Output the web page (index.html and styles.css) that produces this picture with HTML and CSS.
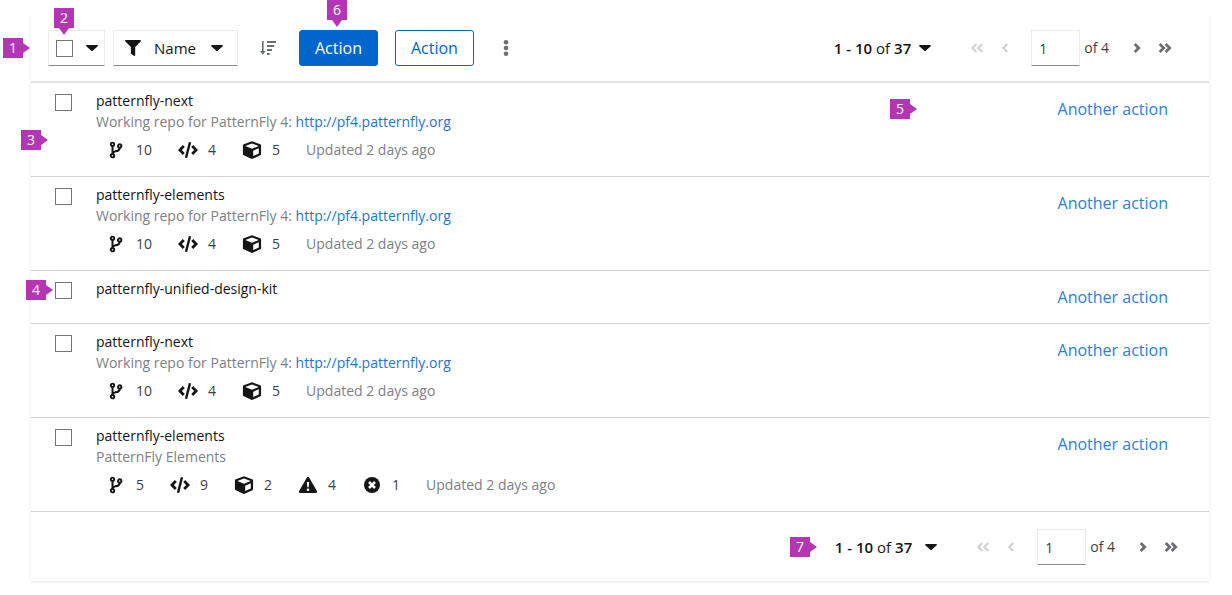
FILE: index.html
```
<!DOCTYPE html>
<html lang="en">
<head>
<meta charset="utf-8">
<meta name="viewport" content="width=device-width, initial-scale=1">
<title>Repositories</title>
<link rel="stylesheet" href="styles.css">
</head>
<body>
<svg class="sprite" aria-hidden="true">
  <symbol id="caret" viewBox="0 0 12 6"><path d="M.8 0h10.400c.7 0 1 .8.5 1.300L6.700 5.700a1 1 0 0 1-1.400 0L.3 1.300C-.2.8.1 0 .8 0z"/></symbol>
  <symbol id="filter" viewBox="0 0 16 16"><path d="M.8 0h14.400c.7 0 1 .8.6 1.300L10.200 7v8.200c0 .7-.7 1-1.200.6l-2.700-1.900a1 1 0 0 1-.4-.7V7L.2 1.300C-.3.8.1 0 .8 0z"/></symbol>
  <symbol id="sort" viewBox="0 0 16 14"><path d="M2 0h1.600v10H5.500L2.800 13.800 0 10h2zM7 0h9v1.900H7zM7 4h7.200v1.900H7zM7 8h5v1.900H7zM7 12h2.600v1.900H7z"/></symbol>
  <symbol id="kebab" viewBox="0 0 6 16"><circle cx="3" cy="2.300" r="2.300"/><circle cx="3" cy="8" r="2.300"/><circle cx="3" cy="13.700" r="2.300"/></symbol>
  <symbol id="left" viewBox="0 0 8 10"><path d="M6.300 1 2.300 5l4 4" fill="none" stroke="currentColor" stroke-width="2.300"/></symbol>
  <symbol id="left2" viewBox="0 0 14 10"><path d="M6.300 1 2.300 5l4 4M12.300 1l-4 4 4 4" fill="none" stroke="currentColor" stroke-width="2.300"/></symbol>
  <symbol id="right" viewBox="0 0 8 10"><path d="m1.700 1 4 4-4 4" fill="none" stroke="currentColor" stroke-width="2.800"/></symbol>
  <symbol id="right2" viewBox="0 0 14 10"><path d="m1.700 1 4 4-4 4M7.700 1l4 4-4 4" fill="none" stroke="currentColor" stroke-width="2.800"/></symbol>
  <symbol id="branch" viewBox="0 0 20 18"><g fill="none" stroke="currentColor" stroke-width="1.900"><circle cx="6.500" cy="3.300" r="1.700"/><circle cx="6.500" cy="14.700" r="1.700"/><circle cx="13.700" cy="5" r="1.700"/><path d="M6.500 5v8M13.700 6.700c0 3.300-2.200 3.400-4.700 3.700-1.600.2-2.500.9-2.500 2.600" stroke-width="2"/></g></symbol>
  <symbol id="code" viewBox="0 0 20 18"><path d="M5.800 5 1.900 9l3.900 4M14.200 5l3.900 4-3.900 4" fill="none" stroke="currentColor" stroke-width="2.800"/><path d="M12 1.200 8 16.800" stroke="currentColor" stroke-width="2.400"/></symbol>
  <symbol id="cube" viewBox="0 0 20 18"><path fill-rule="evenodd" d="M9.300.4q.7-.3 1.400 0l7.500 2.800q.9.400.9 1.300v8.600q0 .8-.8 1.200l-7.600 3.500q-.7.3-1.400 0l-7.600-3.500q-.8-.4-.8-1.200V4.500q0-.9.900-1.300zM10 2.500 3.300 5 10 7.700 16.700 5zM11.200 9.700v5.400l5.600-2.700V7.300z"/></symbol>
  <symbol id="warn" viewBox="0 0 20 18"><path fill-rule="evenodd" d="M8.900 1.500q1.100-1.600 2.200 0l7.800 13.600q.7 1.700-1 1.900H2.100q-1.700-.2-1-1.900zM8.900 6l.4 5.300h1.400l.4-5.300zM10 12.500a1.300 1.300 0 1 0 0 2.600 1.300 1.300 0 0 0 0-2.600z"/></symbol>
  <symbol id="error" viewBox="0 0 20 18"><circle cx="10" cy="9" r="8"/><path d="m7 6 6 6M13 6l-6 6" stroke="#fff" stroke-width="2.600"/></symbol>
</svg>

<main class="card">
  <span class="marker marker-1">1</span>
  <header class="toolbar">
    <div class="bulk">
      <span class="marker marker-down marker-2">2</span>
      <input class="check" type="checkbox" aria-label="Select all">
      <button class="plain" aria-label="Selection options"><svg class="caret"><use href="#caret"/></svg></button>
    </div>
    <label class="filter">
      <svg class="icon-16"><use href="#filter"/></svg>
      <select class="filter-select" aria-label="Filter by"><option>Name</option></select>
      <svg class="caret filter-caret"><use href="#caret"/></svg>
    </label>
    <button class="plain sort" aria-label="Sort"><svg class="icon-sort"><use href="#sort"/></svg></button>
    <div class="actions">
      <span class="marker marker-down marker-6">6</span>
      <button class="btn btn-primary">Action</button>
      <button class="btn btn-secondary">Action</button>
    </div>
    <button class="plain kebab" aria-label="More actions"><svg class="icon-kebab"><use href="#kebab"/></svg></button>
    <nav class="pagination" aria-label="Pagination">
      <button class="plain range"><span><b>1 - 10</b> of <b>37</b></span><svg class="caret"><use href="#caret"/></svg></button>
      <button class="plain first" disabled aria-label="First page"><svg class="icon-double"><use href="#left2"/></svg></button>
      <button class="plain prev" disabled aria-label="Previous page"><svg class="icon-single"><use href="#left"/></svg></button>
      <input class="page" type="text" value="1" aria-label="Current page"><span class="total">of 4</span>
      <button class="plain next" aria-label="Next page"><svg class="icon-single"><use href="#right"/></svg></button>
      <button class="plain last" aria-label="Last page"><svg class="icon-double"><use href="#right2"/></svg></button>
    </nav>
  </header>

  <ul class="list">
    <li class="row">
      <span class="marker marker-3">3</span>
      <input class="check" type="checkbox" id="r1">
      <div class="body">
        <label class="name" for="r1">patternfly-next</label>
        <p class="desc">Working repo for PatternFly 4: <a href="#">http://pf4.patternfly.org</a></p>
        <div class="stats">
          <span class="stat"><svg class="icon-20"><use href="#branch"/></svg>10</span>
          <span class="stat"><svg class="icon-20"><use href="#code"/></svg>4</span>
          <span class="stat"><svg class="icon-20"><use href="#cube"/></svg>5</span>
          <span class="updated">Updated 2 days ago</span>
        </div>
      </div>
      <span class="marker marker-5">5</span>
      <button class="plain another">Another action</button>
    </li>
    <li class="row">
      <input class="check" type="checkbox" id="r2">
      <div class="body">
        <label class="name" for="r2">patternfly-elements</label>
        <p class="desc">Working repo for PatternFly 4: <a href="#">http://pf4.patternfly.org</a></p>
        <div class="stats">
          <span class="stat"><svg class="icon-20"><use href="#branch"/></svg>10</span>
          <span class="stat"><svg class="icon-20"><use href="#code"/></svg>4</span>
          <span class="stat"><svg class="icon-20"><use href="#cube"/></svg>5</span>
          <span class="updated">Updated 2 days ago</span>
        </div>
      </div>
      <button class="plain another">Another action</button>
    </li>
    <li class="row">
      <span class="marker marker-4">4</span>
      <input class="check" type="checkbox" id="r3">
      <div class="body">
        <label class="name" for="r3">patternfly-unified-design-kit</label>
      </div>
      <button class="plain another">Another action</button>
    </li>
    <li class="row">
      <input class="check" type="checkbox" id="r4">
      <div class="body">
        <label class="name" for="r4">patternfly-next</label>
        <p class="desc">Working repo for PatternFly 4: <a href="#">http://pf4.patternfly.org</a></p>
        <div class="stats">
          <span class="stat"><svg class="icon-20"><use href="#branch"/></svg>10</span>
          <span class="stat"><svg class="icon-20"><use href="#code"/></svg>4</span>
          <span class="stat"><svg class="icon-20"><use href="#cube"/></svg>5</span>
          <span class="updated">Updated 2 days ago</span>
        </div>
      </div>
      <button class="plain another">Another action</button>
    </li>
    <li class="row">
      <input class="check" type="checkbox" id="r5">
      <div class="body">
        <label class="name" for="r5">patternfly-elements</label>
        <p class="desc">PatternFly Elements</p>
        <div class="stats">
          <span class="stat"><svg class="icon-20"><use href="#branch"/></svg>5</span>
          <span class="stat"><svg class="icon-20"><use href="#code"/></svg>9</span>
          <span class="stat"><svg class="icon-20"><use href="#cube"/></svg>2</span>
          <span class="stat"><svg class="icon-20"><use href="#warn"/></svg>4</span>
          <span class="stat"><svg class="icon-20"><use href="#error"/></svg>1</span>
          <span class="updated">Updated 2 days ago</span>
        </div>
      </div>
      <button class="plain another">Another action</button>
    </li>
  </ul>

  <footer class="footer">
    <nav class="pagination" aria-label="Pagination, bottom">
      <span class="marker marker-7">7</span>
      <button class="plain range range-wide"><span><b>1 - 10</b> of <b>37</b></span><svg class="caret"><use href="#caret"/></svg></button>
      <button class="plain first" disabled aria-label="First page"><svg class="icon-double"><use href="#left2"/></svg></button>
      <button class="plain prev" disabled aria-label="Previous page"><svg class="icon-single"><use href="#left"/></svg></button>
      <input class="page" type="text" value="1" aria-label="Current page"><span class="total">of 4</span>
      <button class="plain next" aria-label="Next page"><svg class="icon-single"><use href="#right"/></svg></button>
      <button class="plain last" aria-label="Last page"><svg class="icon-double"><use href="#right2"/></svg></button>
    </nav>
  </footer>
</main>
</body>
</html>
```
FILE: styles.css
```
* { box-sizing: border-box; }

body {
  margin: 0;
  padding: 14px 23px 12px 31px;
  background: #fff;
  color: #151515;
  font: 14px/20px "Open Sans", "Noto Sans", sans-serif;
}

button, input, select { font: inherit; color: inherit; margin: 0; }
svg { display: block; fill: currentColor; flex: none; }
.sprite { position: absolute; width: 0; height: 0; }

.card {
  position: relative;
  background: #fff;
  box-shadow: 0 1px 2px rgba(0, 0, 0, .12);
}

/* Controls */
.plain { padding: 0; border: 0; background: none; display: flex; align-items: center; cursor: pointer; }
.check {
  appearance: none;
  width: 17px;
  height: 17px;
  border: 1px solid #72767b;
  background: #fff;
  flex: none;
}
.caret { width: 12px; height: 6px; }
.icon-16 { width: 16px; height: 16px; }
.icon-20 { width: 20px; height: 18px; }
.icon-sort { width: 16px; height: 14px; }
.icon-kebab { width: 6px; height: 16px; }
.icon-single { width: 8px; height: 10px; }
.icon-double { width: 14px; height: 10px; }

/* Toolbar */
.toolbar {
  display: flex;
  align-items: center;
  padding: 16px 37px 15px 17px;
  border-bottom: 2px solid #e2e2e2;
}
.bulk, .filter, .page {
  height: 36px;
  border: 1px solid #ededed;
  border-bottom-color: #8a8d90;
  background: #fff;
}
.bulk {
  position: relative;
  display: flex;
  align-items: center;
  gap: 13px;
  padding: 0 6px 0 7px;
  margin-right: 8px;
}
.filter {
  position: relative;
  display: flex;
  align-items: center;
  width: 125px;
  padding-left: 11px;
}
.filter-select {
  appearance: none;
  flex: 1;
  height: 100%;
  padding: 0 0 0 13px;
  border: 0;
  background: none;
  font-size: 15px;
}
.filter-caret { position: absolute; right: 14px; pointer-events: none; }
.sort { margin-left: 22px; color: #6a6e73; }
.actions { position: relative; display: flex; gap: 17px; margin-left: 23px; }
.btn {
  height: 36px;
  padding: 0 15px;
  border: 1px solid #06c;
  border-radius: 3px;
  font-size: 16px;
  cursor: pointer;
}
.btn-primary { background: #06c; color: #fff; }
.btn-secondary { background: #fff; color: #06c; }
.kebab { margin-left: 29px; color: #6a6e73; }

/* Pagination */
.pagination { position: relative; display: flex; align-items: center; margin-left: auto; color: #6a6e73; }
.pagination :disabled { color: #d2d2d2; }
.range { gap: 8px; font-size: 15px; color: #151515; }
.range-wide { gap: 13px; }
.range b { font-weight: 600; }
.first { margin-left: 39px; }
.prev { margin-left: 17px; }
.page { width: 49px; margin-left: 22px; padding: 0 7px; color: #3c3f42; }
.total { margin-left: 4px; color: #3c3f42; }
.next { margin-left: 24px; }
.last { margin-left: 17px; }

/* List */
.list { margin: 0; padding: 0; list-style: none; }
.row {
  position: relative;
  display: flex;
  align-items: flex-start;
  padding: 8px 41px 16px 24px;
  border-bottom: 1px solid #d2d2d2;
}
.row .check { margin-top: 3px; }
.body { flex: 1; margin-left: 24px; }
.name { display: block; width: max-content; }
.desc { margin: 1px 0 8px; color: #7d8085; }
.desc a { color: #1b76d3; text-decoration: none; }
.stats { display: flex; align-items: center; gap: 26px; padding-left: 10px; }
.stat { display: flex; align-items: center; gap: 10px; color: #3c3f42; }
.stat svg { color: #151515; }
.updated { color: #7d8085; }
.another { margin-top: 8px; color: #2b80da; font-size: 16px; }

.footer { display: flex; padding: 17px 31px 16px 17px; }

/* Numbered annotation markers */
.marker {
  position: absolute;
  z-index: 1;
  width: 20px;
  height: 20px;
  background: #b536b5;
  color: #fff;
  font-size: 14px;
  line-height: 20px;
  text-align: center;
}
.marker::after {
  content: "";
  position: absolute;
  left: 100%;
  top: 5px;
  border: 5px solid transparent;
  border-left: 7px solid #b536b5;
  border-right: 0;
}
.marker-down::after {
  left: 5px;
  top: 100%;
  border: 5px solid transparent;
  border-top: 7px solid #b536b5;
  border-bottom: 0;
}
.marker-1 { left: -28px; top: 24px; }
.marker-2 { left: 5px; top: -23px; }
.marker-3 { left: -10px; top: 47px; }
.marker-4 { left: -5px; top: 9px; }
.marker-5 { right: 299px; top: 16px; }
.marker-6 { left: 28px; top: -30px; }
.marker-7 { right: 368px; top: 8px; }
```
